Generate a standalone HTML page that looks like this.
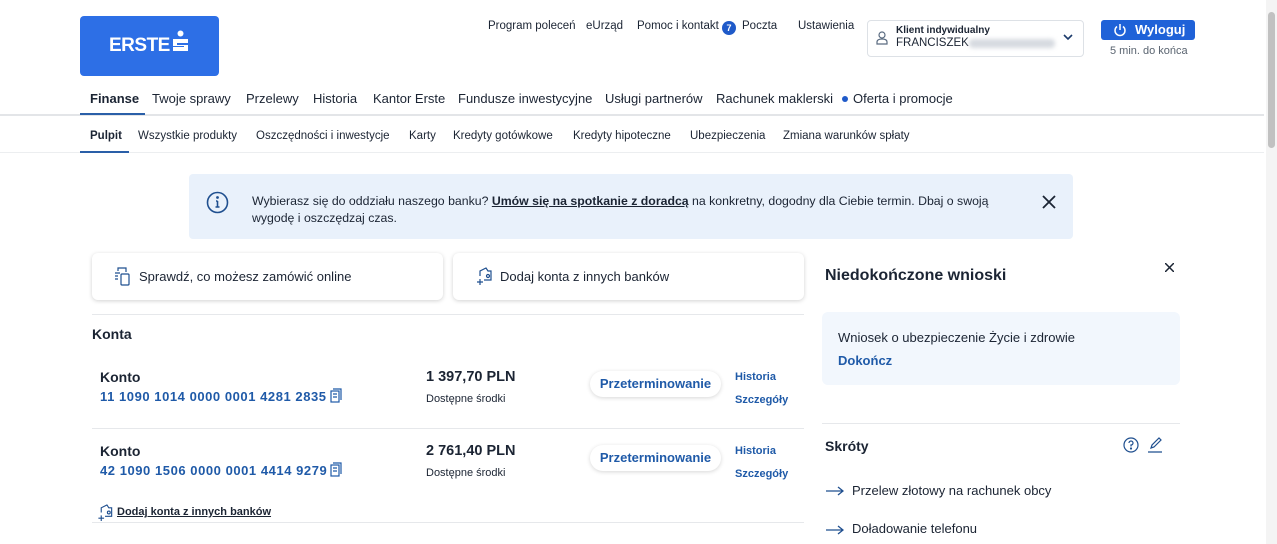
<!DOCTYPE html>
<html><head><meta charset="utf-8"><style>
*{margin:0;padding:0;box-sizing:border-box}
body{width:1277px;height:544px;overflow:hidden;background:#fff;font-family:"Liberation Sans",sans-serif;color:#1b2433;position:relative}
.a{position:absolute;white-space:nowrap}
.blue{color:#1f5aa8}
.line{position:absolute;height:1px;background:#e6e8eb}
.card{position:absolute;background:#fff;border-radius:6px;box-shadow:0 1px 4px rgba(0,0,0,.18)}
.pill{position:absolute;width:131px;height:26px;border-radius:13px;background:#fff;box-shadow:0 1px 4px rgba(0,0,0,.16);color:#1f5aa8;font-weight:bold;font-size:13px;text-align:center;line-height:26px}
.nav{position:absolute;top:91px;font-size:13px;white-space:nowrap}
.sub{position:absolute;top:130px;font-size:11.5px;white-space:nowrap}
</style></head><body>
<div class="a" style="left:80px;top:16px;width:139px;height:60px;background:#2d6fe6;border-radius:4px"></div>
<div class="a" style="left:109px;top:35px;color:#fff;font-weight:bold;font-size:19px;letter-spacing:-0.5px">ERSTE</div>
<svg class="a" style="left:171px;top:30px" width="19" height="24" viewBox="0 0 19 24"><circle cx="9.5" cy="3.5" r="3" fill="#fff"/><path d="M2 9h15v4H6v2h11v6H2v-4h11v-1H2z" fill="#fff"/></svg>
<div class="a" style="left:488px;top:20px;font-size:11.5px">Program poleceń</div>
<div class="a" style="left:586px;top:20px;font-size:11.5px">eUrząd</div>
<div class="a" style="left:637px;top:20px;font-size:11.5px">Pomoc i kontakt</div>
<div class="a" style="left:722px;top:21px;width:14px;height:14px;border-radius:7px;background:#1f5ac9;color:#fff;font-size:9px;font-weight:bold;text-align:center;line-height:14px">7</div>
<div class="a" style="left:742px;top:20px;font-size:11.5px">Poczta</div>
<div class="a" style="left:798px;top:20px;font-size:11.5px">Ustawienia</div>
<div class="a" style="left:867px;top:20px;width:217px;height:37px;border:1px solid #dde1e6;border-radius:4px"></div>
<svg class="a" style="left:876px;top:31px" width="12" height="14" viewBox="0 0 12 14" fill="none" stroke="#5a6b80" stroke-width="1.2"><circle cx="6" cy="4" r="3"/><path d="M1 13v-2c0-2 2-3 5-3s5 1 5 3v2z"/></svg>
<div class="a" style="left:896px;top:25px;font-size:10px;font-weight:bold">Klient indywidualny</div>
<div class="a" style="left:896px;top:37px;font-size:11.5px">FRANCISZEK</div>
<div class="a" style="left:969px;top:39px;width:86px;height:9px;background:#d6dae0;border-radius:4px;filter:blur(2px)"></div>
<svg class="a" style="left:1063px;top:34px" width="10" height="7" viewBox="0 0 10 7" fill="none" stroke="#1b3a6b" stroke-width="1.6"><path d="M1 1l4 4 4-4"/></svg>
<div class="a" style="left:1101px;top:20px;width:94px;height:20px;background:#1f62d8;border-radius:3px"></div>
<svg class="a" style="left:1113px;top:23px" width="14" height="14" viewBox="0 0 14 14" fill="none" stroke="#fff" stroke-width="1.5"><path d="M4 3.5a5 5 0 1 0 6 0M7 1v6"/></svg>
<div class="a" style="left:1135px;top:22px;font-size:13px;font-weight:bold;color:#fff">Wyloguj</div>
<div class="a" style="left:1110px;top:45px;font-size:11px;color:#5a6470">5 min. do końca</div>
<div class="nav" style="left:90px;font-weight:bold">Finanse</div>
<div class="nav" style="left:152px">Twoje sprawy</div>
<div class="nav" style="left:246px">Przelewy</div>
<div class="nav" style="left:313px">Historia</div>
<div class="nav" style="left:373px">Kantor Erste</div>
<div class="nav" style="left:458px">Fundusze inwestycyjne</div>
<div class="nav" style="left:605px">Usługi partnerów</div>
<div class="nav" style="left:716px">Rachunek maklerski</div>
<div class="a" style="left:842px;top:96px;width:6px;height:6px;border-radius:3px;background:#1f5ac9"></div>
<div class="nav" style="left:853px">Oferta i promocje</div>
<div class="line" style="left:0;top:114px;width:1264px;height:2px;background:#e3e5e8"></div>
<div class="a" style="left:80px;top:113px;width:65px;height:2px;background:#2a5fa8"></div>
<div class="sub" style="left:90px;font-weight:bold">Pulpit</div>
<div class="sub" style="left:138px">Wszystkie produkty</div>
<div class="sub" style="left:256px">Oszczędności i inwestycje</div>
<div class="sub" style="left:409px">Karty</div>
<div class="sub" style="left:453px">Kredyty gotówkowe</div>
<div class="sub" style="left:573px">Kredyty hipoteczne</div>
<div class="sub" style="left:690px">Ubezpieczenia</div>
<div class="sub" style="left:783px">Zmiana warunków spłaty</div>
<div class="line" style="left:0;top:152px;width:1264px;background:#eceef0"></div>
<div class="a" style="left:80px;top:151px;width:49px;height:2px;background:#2a5fa8"></div>
<div class="a" style="left:1266px;top:0;width:11px;height:544px;background:#f4f4f4"></div>
<div class="a" style="left:1268px;top:12px;width:7px;height:136px;background:#c1c1c1;border-radius:4px"></div>
<div class="a" style="left:189px;top:174px;width:884px;height:65px;background:#e9f1fb;border-radius:4px"></div>
<svg class="a" style="left:206px;top:191px" width="23" height="23" viewBox="0 0 23 23" fill="none" stroke="#1f4f8f" stroke-width="1.6"><circle cx="11.5" cy="11.5" r="10"/><path d="M11.5 10v6M9.5 16h4M10 10h1.5"/><circle cx="11.5" cy="6.5" r=".6" fill="#1f4f8f"/></svg>
<div class="a" style="left:252px;top:193px;font-size:12.3px;line-height:17px">Wybierasz się do oddziału naszego banku? <b style="text-decoration:underline">Umów się na spotkanie z doradcą</b> na konkretny, dogodny dla Ciebie termin. Dbaj o swoją<br>wygodę i oszczędzaj czas.</div>
<svg class="a" style="left:1042px;top:195px" width="14" height="14" viewBox="0 0 14 14" stroke="#1b2433" stroke-width="1.8"><path d="M1 1l12 12M13 1L1 13"/></svg>
<div class="card" style="left:92px;top:253px;width:351px;height:47px"></div>
<svg class="a" style="left:114px;top:267px" width="17" height="19" viewBox="0 0 17 19" fill="none" stroke="#1f4f8f" stroke-width="1.2"><path d="M4 4V1h8v4M1 6h5M1 9h3M1 12h3"/><rect x="7" y="7" width="8" height="11" rx="1"/></svg>
<div class="a" style="left:139px;top:269px;font-size:13px">Sprawdź, co możesz zamówić online</div>
<div class="card" style="left:453px;top:253px;width:351px;height:47px"></div>
<svg class="a" style="left:476px;top:267px" width="17" height="19" viewBox="0 0 17 19" fill="none" stroke="#1f4f8f" stroke-width="1.2"><path d="M4 9V4l6-3 2 3h3v9H8M1 15h6M4 12v6"/><circle cx="12" cy="9" r="1.5"/></svg>
<div class="a" style="left:500px;top:269px;font-size:13px">Dodaj konta z innych banków</div>
<div class="line" style="left:92px;top:314px;width:712px"></div>
<div class="a" style="left:92px;top:326px;font-size:14px;font-weight:bold">Konta</div>

<div class="a" style="left:100px;top:369px;font-size:14px;font-weight:bold">Konto</div>
<div class="a blue" style="left:100px;top:389px;font-size:13px;font-weight:bold;letter-spacing:.55px">11 1090 1014 0000 0001 4281 2835</div>
<svg class="a" style="left:330px;top:388px" width="12" height="15" viewBox="0 0 12 15" fill="none" stroke="#1f5aa8" stroke-width="1.2"><rect x="1" y="3" width="8" height="11"/><path d="M3 1h8v11M3 6h4M3 9h4"/></svg>
<div class="a" style="left:426px;top:369px;font-size:14.5px;font-weight:bold">1 397,70 PLN</div>
<div class="a" style="left:426px;top:393px;font-size:11px">Dostępne środki</div>
<div class="pill" style="left:590px;top:371px">Przeterminowanie</div>
<div class="a blue" style="left:735px;top:371px;font-size:11px;font-weight:bold">Historia</div>
<div class="a blue" style="left:735px;top:394px;font-size:11px;font-weight:bold">Szczegóły</div>
<div class="line" style="left:92px;top:428px;width:712px"></div>

<div class="a" style="left:100px;top:443px;font-size:14px;font-weight:bold">Konto</div>
<div class="a blue" style="left:100px;top:463px;font-size:13px;font-weight:bold;letter-spacing:.55px">42 1090 1506 0000 0001 4414 9279</div>
<svg class="a" style="left:330px;top:462px" width="12" height="15" viewBox="0 0 12 15" fill="none" stroke="#1f5aa8" stroke-width="1.2"><rect x="1" y="3" width="8" height="11"/><path d="M3 1h8v11M3 6h4M3 9h4"/></svg>
<div class="a" style="left:426px;top:443px;font-size:14.5px;font-weight:bold">2 761,40 PLN</div>
<div class="a" style="left:426px;top:467px;font-size:11px">Dostępne środki</div>
<div class="pill" style="left:590px;top:445px">Przeterminowanie</div>
<div class="a blue" style="left:735px;top:445px;font-size:11px;font-weight:bold">Historia</div>
<div class="a blue" style="left:735px;top:468px;font-size:11px;font-weight:bold">Szczegóły</div>

<svg class="a" style="left:97px;top:504px" width="17" height="18" viewBox="0 0 17 19" fill="none" stroke="#1f4f8f" stroke-width="1.2"><path d="M4 9V4l6-3 2 3h3v9H8M1 15h6M4 12v6"/><circle cx="12" cy="9" r="1.5"/></svg>
<div class="a" style="left:117px;top:506px;font-size:11px;font-weight:bold;text-decoration:underline">Dodaj konta z innych banków</div>
<div class="line" style="left:92px;top:522px;width:712px"></div>

<div class="a" style="left:825px;top:267px;font-size:16px;font-weight:bold">Niedokończone wnioski</div>
<svg class="a" style="left:1165px;top:263px" width="9" height="9" viewBox="0 0 9 9" stroke="#1b2433" stroke-width="1.5"><path d="M0 0l9 9M9 0L0 9"/></svg>
<div class="a" style="left:822px;top:312px;width:358px;height:73px;background:#f2f7fd;border-radius:6px"></div>
<div class="a" style="left:838px;top:330px;font-size:13px">Wniosek o ubezpieczenie Życie i zdrowie</div>
<div class="a blue" style="left:838px;top:353px;font-size:13px;font-weight:bold">Dokończ</div>
<div class="line" style="left:822px;top:423px;width:358px"></div>
<div class="a" style="left:825px;top:438px;font-size:14px;font-weight:bold">Skróty</div>
<svg class="a" style="left:1123px;top:437px" width="16" height="16" viewBox="0 0 16 16" fill="none" stroke="#1f4f8f" stroke-width="1.2"><circle cx="8" cy="8" r="7"/><path d="M6 6a2 2 0 1 1 2 2v1.5"/><circle cx="8" cy="11.5" r=".5" fill="#1f4f8f"/></svg>
<svg class="a" style="left:1147px;top:437px" width="16" height="16" viewBox="0 0 16 16" fill="none" stroke="#1f4f8f" stroke-width="1.2"><path d="M4 11l1-3 7-7 2 2-7 7-3 1zM1 15h14"/></svg>
<svg class="a" style="left:826px;top:486px" width="18" height="10" viewBox="0 0 18 10" fill="none" stroke="#1f4f8f" stroke-width="1.3"><path d="M0 5h17M12 1l5 4-5 4"/></svg>
<div class="a" style="left:852px;top:483px;font-size:13px">Przelew złotowy na rachunek obcy</div>
<svg class="a" style="left:826px;top:525px" width="18" height="10" viewBox="0 0 18 10" fill="none" stroke="#1f4f8f" stroke-width="1.3"><path d="M0 5h17M12 1l5 4-5 4"/></svg>
<div class="a" style="left:852px;top:521px;font-size:13px">Doładowanie telefonu</div>
</body></html>
